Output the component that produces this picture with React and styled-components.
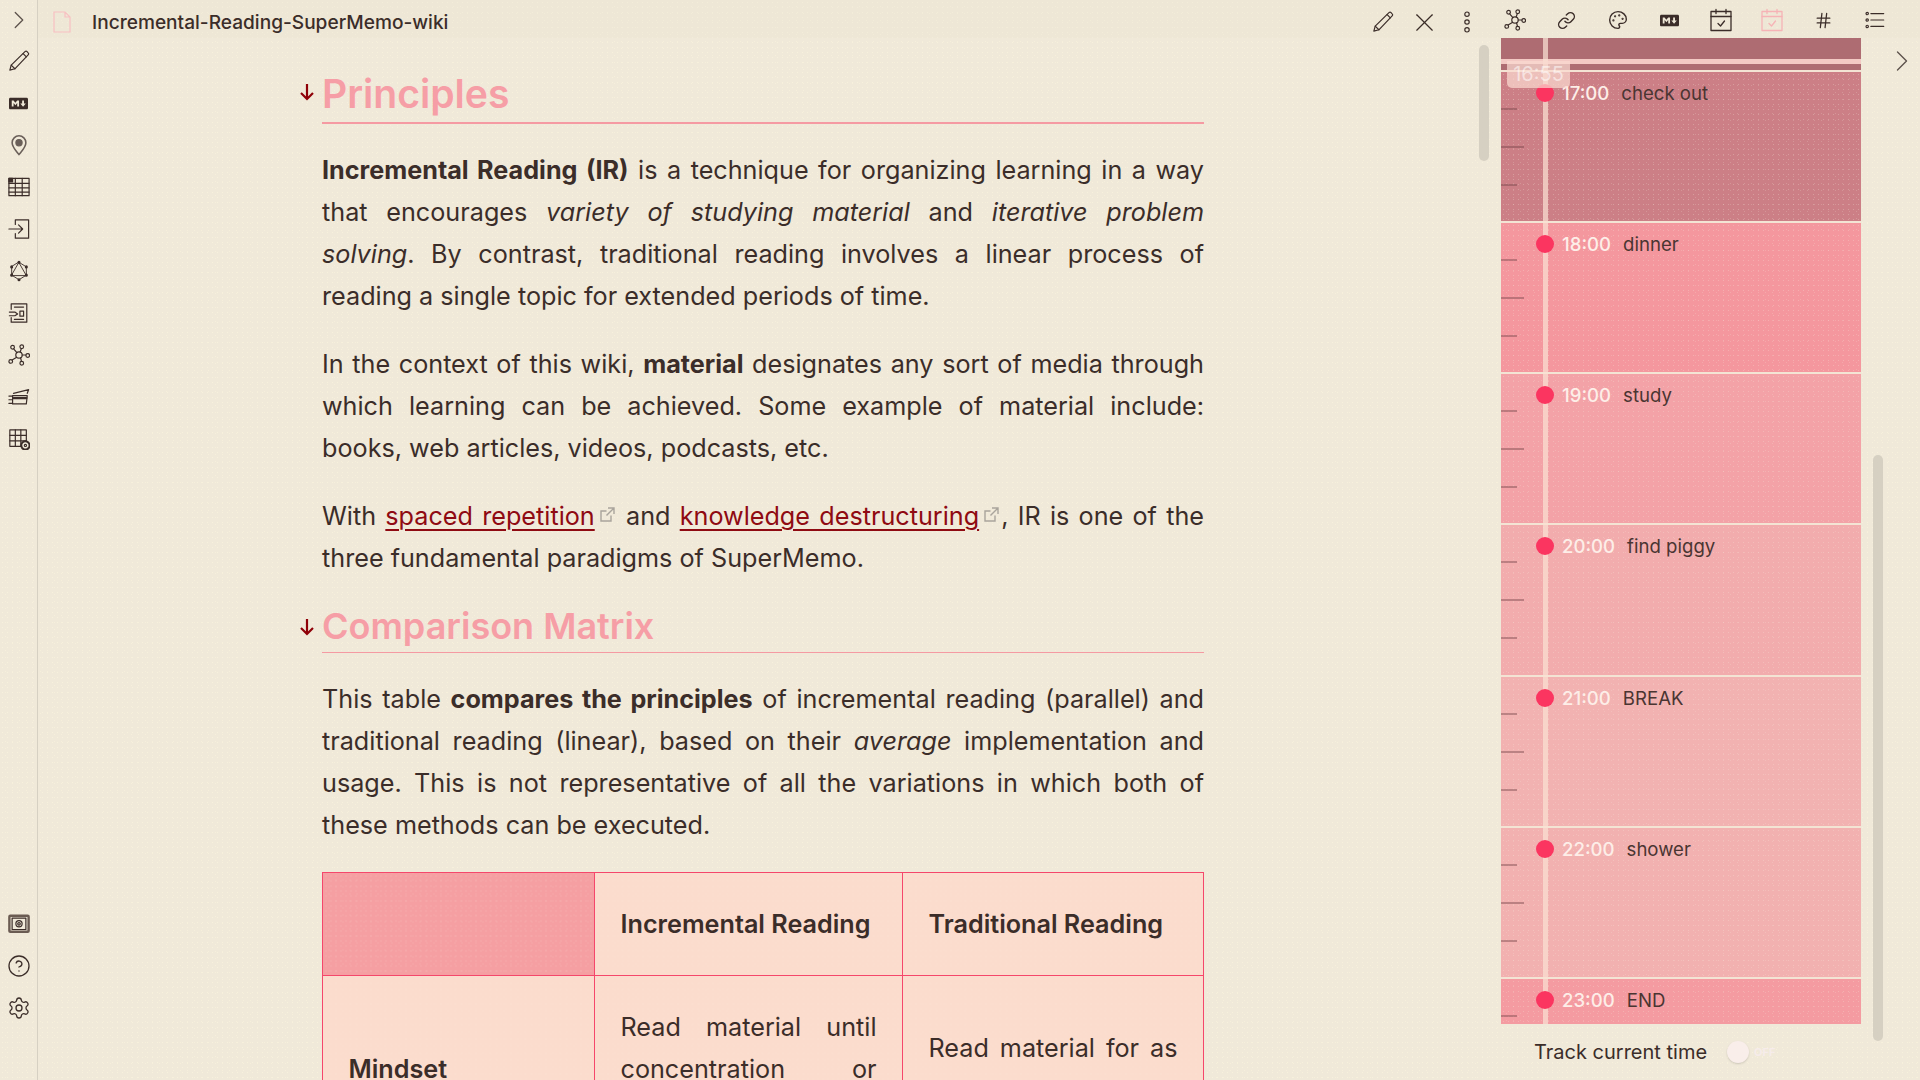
import React from "react";
import styled, { createGlobalStyle } from "styled-components";
import {
  ChevronRight,
  CircleHelp,
  Settings,
  Palette,
  Link as LinkIcon,
  Hash,
  X,
} from "lucide-react";
import { FaMarkdown } from "react-icons/fa";

const speckle = `
  background-image:
    radial-gradient(rgba(245, 238, 220, 0.28) 0.6px, transparent 0.9px),
    radial-gradient(rgba(245, 238, 220, 0.2) 0.5px, transparent 0.8px);
  background-size: 5px 5px, 7px 7px;
  background-position: 0 0, 2px 3px;
`;

const GlobalStyle = createGlobalStyle`
  html, body {
    margin: 0;
    height: 100%;
    overflow: hidden;
  }
  body {
    font-family: Inter, "Noto Sans", sans-serif;
    color: #3b2d29;
    background-color: #f0e9d9;
    background-image:
      radial-gradient(#f8f2dc 0.6px, transparent 0.9px),
      radial-gradient(#f6efdb 0.5px, transparent 0.8px);
    background-size: 5px 5px, 7px 7px;
    background-position: 0 0, 2px 3px;
  }
`;

const Shell = styled.div`
  display: flex;
  width: 1920px;
  height: 1080px;
  overflow: hidden;
`;

const Ribbon = styled.nav`
  width: 37px;
  flex: none;
  border-right: 1px solid #d6d0c2;
  display: flex;
  flex-direction: column;
  justify-content: space-between;
  padding-bottom: 51px;
  box-sizing: content-box;
  height: 1029px;
`;

const RibbonGroup = styled.div`
  display: flex;
  flex-direction: column;
`;

const RibbonTop = styled.div`
  height: 40px;
  display: flex;
  align-items: center;
  justify-content: center;
  color: #5d524c;
`;

const RibbonItem = styled.div`
  height: 42px;
  display: flex;
  align-items: center;
  justify-content: center;
  color: #3b2d29;
`;

const Main = styled.div`
  flex: 1;
  min-width: 0;
  display: flex;
  flex-direction: column;
  position: relative;
`;

const TitleBar = styled.header`
  height: 38px;
  flex: none;
  box-sizing: border-box;
  display: flex;
  align-items: center;
  padding: 6px 33px 0 15px;
  background: rgba(232, 224, 205, 0.2);
`;

const Title = styled.div`
  margin-left: 21px;
  font-size: 19.1px;
  font-weight: 500;
  flex: 1;
`;

const ToolGroup = styled.div`
  display: flex;
  align-items: center;
  gap: ${(p) => p.$gap}px;
  margin: ${(p) => p.$margin || "0"};
`;

const Tool = styled.span`
  width: 24px;
  height: 24px;
  display: flex;
  align-items: center;
  justify-content: center;
  color: ${(p) => (p.$pink ? "#f6b3b6" : "#3b2d29")};
  svg {
    flex: none;
  }
`;

const Body = styled.div`
  flex: 1;
  min-height: 0;
  display: flex;
`;

const Editor = styled.main`
  width: 1463px;
  flex: none;
  position: relative;
  overflow: hidden;
  padding-left: 284px;
  box-sizing: border-box;
`;

const Doc = styled.article`
  width: 882px;
  font-size: 25.2px;
  line-height: 42px;
  text-align: justify;
`;

const Heading = styled.h2`
  position: relative;
  margin: ${(p) => (p.$first ? "32px" : "-3px")} 0 25px;
  padding-bottom: ${(p) => (p.$first ? "4px" : "2px")};
  border-bottom: ${(p) => (p.$first ? "2px" : "1px")} solid #f59aa2;
  font-size: ${(p) => (p.$first ? "39.1px" : "36px")};
  line-height: 48px;
  font-weight: 600;
  color: #f69ea6;
  text-align: left;
`;

const Fold = styled.svg`
  position: absolute;
  left: -23px;
  top: ${(p) => (p.$first ? 13 : 16)}px;
  width: 16px;
  height: 18px;
  fill: none;
  stroke: #8f0008;
  stroke-width: 2.2;
`;

const Para = styled.p`
  margin: 0 0 26px;
  strong {
    font-weight: 650;
  }
`;

const Ext = styled.a`
  color: #8f0a12;
  text-decoration: underline;
  text-decoration-thickness: 2px;
  text-underline-offset: 4px;
`;

const ExtMark = styled.svg`
  display: inline-block;
  width: 15px;
  height: 15px;
  margin: 0 2px 8px 5px;
  vertical-align: middle;
  fill: none;
  stroke: #a9a49c;
  stroke-width: 1.4;
`;

const Table = styled.table`
  width: 882px;
  table-layout: fixed;
  border-collapse: collapse;
  background: #fbdccd;
`;

const Th = styled.th`
  box-sizing: border-box;
  border: 1px solid #f5476b;
  padding: 30px 25.5px;
  font-weight: 600;
  text-align: left;
  background-color: ${(p) => (p.$corner ? "#f59fa2" : "#fbdccd")};
  ${speckle}
  width: ${(p) => p.$w || "auto"};
`;

const Td = styled.td`
  border: 1px solid #f5476b;
  padding: 30px 25.5px;
  font-weight: ${(p) => (p.$label ? 600 : 400)};
  text-align: ${(p) => (p.$label ? "left" : "justify")};
  vertical-align: middle;
  ${speckle}
`;

const Scroll = styled.div`
  position: absolute;
  left: ${(p) => p.$left}px;
  top: ${(p) => p.$top}px;
  width: 10px;
  height: ${(p) => p.$h}px;
  border-radius: 5px;
  background: #d6d0c2;
`;

const Side = styled.aside`
  width: 360px;
  flex: none;
  display: flex;
  flex-direction: column;
`;

const Timeline = styled.div`
  position: relative;
  height: 986px;
  overflow: hidden;
`;

const Stub = styled.div`
  height: 31.5px;
  background: #ae6c72;
`;

const Hour = styled.div`
  position: relative;
  height: 151.33px;
  box-sizing: border-box;
  border-top: 2px solid #f3e4d4;
  background-color: ${(p) => p.$bg};
  ${speckle}
  padding: 9px 0 0 35px;
  display: flex;
  align-items: center;
  align-content: flex-start;
  flex-wrap: wrap;
  font-size: 18.6px;
  line-height: 24px;
`;

const Dot = styled.span`
  position: relative;
  z-index: 1;
  width: 18px;
  height: 18px;
  border-radius: 50%;
  background: #fb3560;
  margin-right: 8px;
`;

const Time = styled.span`
  position: relative;
  z-index: 1;
  color: #fdeee8;
  font-weight: 500;
  margin-right: 12px;
`;

const Label = styled.span`
  color: #4a3532;
`;

const Tick = styled.i`
  position: absolute;
  left: 0;
  top: ${(p) => p.$at}px;
  width: ${(p) => p.$w}px;
  height: 2px;
  background: rgba(120, 70, 75, 0.45);
`;

const NowStrip = styled.div`
  position: absolute;
  left: 0;
  right: 0;
  top: 21px;
  height: 5px;
  background: #f3c9c4;
`;

const NowLine = styled.div`
  position: absolute;
  left: 42px;
  top: 0;
  bottom: 0;
  width: 5px;
  background: rgba(250, 224, 210, 0.72);
`;

const NowPill = styled.div`
  position: absolute;
  z-index: 2;
  left: 6px;
  top: 23px;
  width: 63px;
  height: 27px;
  border-radius: 0 0 5px 5px;
  background: rgba(250, 218, 208, 0.72);
  color: rgba(255, 255, 255, 0.55);
  font-size: 20px;
  line-height: 27px;
  text-align: center;
`;

const TrackRow = styled.div`
  flex: 1;
  display: flex;
  align-items: center;
  padding-left: 33px;
  font-size: 20px;
`;

const Knob = styled.span`
  width: 22px;
  height: 22px;
  border-radius: 50%;
  background: #f9eeea;
  box-shadow: 0 1px 2px rgba(0, 0, 0, 0.15);
  margin-left: 20px;
`;

const Off = styled.span`
  margin-left: 5px;
  font-size: 11px;
  font-weight: 700;
  color: #f6ecea;
`;

const Expand = styled.div`
  position: absolute;
  left: 1846px;
  top: 43px;
  color: #5d524c;
`;

const Glyph = styled.svg`
  width: ${(p) => p.$s || 22}px;
  height: ${(p) => p.$s || 22}px;
  fill: none;
  stroke: currentColor;
  stroke-width: 1.3;
  stroke-linecap: round;
  stroke-linejoin: round;
`;

const PageIcon = styled.svg`
  width: 18px;
  height: 22px;
  flex: none;
  fill: none;
  stroke: #f8c0c2;
  stroke-width: 1.2;
`;

const I = ({ s, children }) => (
  <Glyph viewBox="0 0 24 24" $s={s}>
    {children}
  </Glyph>
);

const PencilIcon = ({ s }) => (
  <I s={s}>
    <path d="M2 22l1.500-5.500L18.500 1.800c.8-.7 1.600-.7 2.300 0l1.200 1.300c.7.700.7 1.500 0 2.200L7.500 20.500z" />
    <path d="M16.500 4l3.500 3.500M3.500 16.500l4 4" />
  </I>
);

const PinIcon = () => (
  <Glyph viewBox="0 0 24 24" $s={22} style={{ color: "#6a5f59" }}>
    <path d="M12 22.500C8 17.500 4.500 14 4.500 9.500a7.500 7.500 0 0 1 15 0C19.500 14 16 17.500 12 22.500z" strokeWidth="1.700" />
    <circle cx="12" cy="9.500" r="3.400" fill="currentColor" />
  </Glyph>
);

const TableIcon = () => (
  <I>
    <rect x="1" y="2.500" width="22" height="19" />
    <path d="M1 8h22M1 13h22M1 17.500h22M8 2.500v19M15.500 2.500v19" />
    <rect x="1" y="2.500" width="4" height="4" fill="currentColor" />
  </I>
);

const EnterIcon = () => (
  <I>
    <path d="M8 7V2h14.500v20H8v-5" />
    <path d="M1 12h15M11.500 7.500l4.500 4.500-4.500 4.500" />
  </I>
);

const HexIcon = () => (
  <I>
    <path d="M12 2.500L20 7.500v9L12 21.500 4 16.500v-9z" strokeWidth="1" />
    <path d="M12 3l8 14H4z" strokeWidth="1" />
    <circle cx="12" cy="2.500" r="1" fill="currentColor" />
    <circle cx="20" cy="7.500" r="1" fill="currentColor" />
    <circle cx="20" cy="16.500" r="1" fill="currentColor" />
    <circle cx="12" cy="21.500" r="1" fill="currentColor" />
    <circle cx="4" cy="16.500" r="1" fill="currentColor" />
    <circle cx="4" cy="7.500" r="1" fill="currentColor" />
  </I>
);

const ImportIcon = () => (
  <I>
    <path d="M3.500 8V2h17v20h-17v-5" />
    <path d="M7 5.500h10M7 19h10M1.500 11h6l3 2-3 2h-6" />
    <rect x="13" y="10" width="4" height="5.500" />
  </I>
);

const GraphIcon = ({ s }) => (
  <I s={s}>
    <circle cx="12" cy="12" r="3.500" />
    <circle cx="5" cy="3.500" r="2" />
    <circle cx="15" cy="3" r="2" />
    <circle cx="21.500" cy="12.500" r="2" />
    <circle cx="15" cy="21" r="2" />
    <circle cx="3" cy="19" r="2" />
    <path d="M6.200 5.200l3.500 4.200M14.500 5l-1.200 3.700M15.500 12h4M13.700 15l1 4M9.500 14.500l-5 3" />
  </I>
);

const CardsIcon = () => (
  <I>
    <path d="M6 8L22.500 4 21 8" />
    <path d="M5 10.500h16l-1 9H5z" />
    <path d="M6 13.200h14" strokeWidth="2.500" />
    <path d="M1 11h4M1 15h4M1 19h4" />
  </I>
);

const TableGearIcon = () => (
  <I>
    <rect x="2" y="2" width="18" height="18" />
    <path d="M2 8h18M2 14h18M8 2v18M14 2v18" />
    <circle cx="19" cy="19" r="4.500" fill="#f0e9d9" strokeWidth="2.200" strokeDasharray="2 1" />
    <circle cx="19" cy="19" r="1.200" />
  </I>
);

const SafeIcon = () => (
  <I>
    <rect x="1.500" y="3" width="21" height="17.500" rx="1" strokeWidth="2.600" stroke="#6a5b52" />
    <rect x="4.500" y="5.500" width="15" height="12.500" />
    <circle cx="12" cy="11.800" r="3.400" />
    <circle cx="12" cy="11.800" r="1.400" />
  </I>
);

const CalendarIcon = () => (
  <I s={24}>
    <rect x="2" y="3.500" width="20" height="19" />
    <path d="M2 8.500h20M7 1.500v4M17 1.500v4M9 15.500l2.500 2.500 4-5" />
  </I>
);

const DotsIcon = () => (
  <I>
    <circle cx="12" cy="3.500" r="2.400" />
    <circle cx="12" cy="12" r="2.400" />
    <circle cx="12" cy="20.500" r="2.400" />
  </I>
);

const ListIcon = () => (
  <I>
    <path d="M7.500 5h14M7.500 12h14M7.500 19h14" />
    <circle cx="3.500" cy="5" r="1.300" />
    <circle cx="3.500" cy="12" r="1.300" />
    <circle cx="3.500" cy="19" r="1.300" />
  </I>
);

const ArrowFold = ({ first }) => (
  <Fold viewBox="0 0 16 18" $first={first}>
    <path d="M8 1v15M2 10l6 6 6-6" />
  </Fold>
);

const ExternalMark = () => (
  <ExtMark viewBox="0 0 15 15">
    <path d="M11 8.500V14H1V4h5.500M8 1h6v6M14 1L6.500 8.500" />
  </ExtMark>
);

const ribbonTop = [
  <PencilIcon key="a" />,
  <FaMarkdown key="b" size={19} />,
  <PinIcon key="c" />,
  <TableIcon key="d" />,
  <EnterIcon key="e" />,
  <HexIcon key="f" />,
  <ImportIcon key="g" />,
  <GraphIcon key="h" />,
  <CardsIcon key="i" />,
  <TableGearIcon key="j" />,
];

const hours = [
  { time: "17:00", label: "check out", bg: "#cc7f86" },
  { time: "18:00", label: "dinner", bg: "#f4979e" },
  { time: "19:00", label: "study", bg: "#f3a2a7" },
  { time: "20:00", label: "find piggy", bg: "#f2acad" },
  { time: "21:00", label: "BREAK", bg: "#f2b2b1" },
  { time: "22:00", label: "shower", bg: "#f2b1b0" },
  { time: "23:00", label: "END", bg: "#f49ba1" },
];

export default function App() {
  return (
    <Shell>
      <GlobalStyle />
      <Ribbon>
        <RibbonGroup>
          <RibbonTop>
            <ChevronRight size={30} strokeWidth={1} />
          </RibbonTop>
          {ribbonTop.map((icon, i) => (
            <RibbonItem key={i}>{icon}</RibbonItem>
          ))}
        </RibbonGroup>
        <RibbonGroup>
          <RibbonItem>
            <SafeIcon />
          </RibbonItem>
          <RibbonItem>
            <CircleHelp size={24} strokeWidth={1.3} />
          </RibbonItem>
          <RibbonItem>
            <Settings size={24} strokeWidth={1.3} />
          </RibbonItem>
        </RibbonGroup>
      </Ribbon>

      <Main>
        <TitleBar>
          <PageIcon viewBox="0 0 18 22">
            <path d="M1 1h11l5 5v15H1zM12 1v5h5" />
          </PageIcon>
          <Title>Incremental-Reading-SuperMemo-wiki</Title>
          <ToolGroup $gap={17.6}>
            <Tool><PencilIcon /></Tool>
            <Tool><X size={31} strokeWidth={0.9} /></Tool>
            <Tool><DotsIcon /></Tool>
          </ToolGroup>
          <ToolGroup $gap={27.5} $margin="-4px 0 0 24px">
            <Tool><GraphIcon /></Tool>
            <Tool><LinkIcon size={19} strokeWidth={1.8} /></Tool>
            <Tool><Palette size={20} strokeWidth={1.7} /></Tool>
            <Tool><FaMarkdown size={19} /></Tool>
            <Tool><CalendarIcon /></Tool>
            <Tool $pink><CalendarIcon /></Tool>
            <Tool><Hash size={19} strokeWidth={1.6} /></Tool>
            <Tool><ListIcon /></Tool>
          </ToolGroup>
        </TitleBar>

        <Body>
          <Editor>
            <Doc>
              <Heading $first>
                <ArrowFold first />
                Principles
              </Heading>
              <Para>
                <strong>Incremental Reading (IR)</strong> is a technique for organizing
                learning in a way that encourages <em>variety of studying material</em> and{" "}
                <em>iterative problem solving</em>. By contrast, traditional reading involves
                a linear process of reading a single topic for extended periods of time.
              </Para>
              <Para>
                In the context of this wiki, <strong>material</strong> designates any sort of
                media through which learning can be achieved. Some example of material
                include: books, web articles, videos, podcasts, etc.
              </Para>
              <Para>
                With <Ext>spaced repetition</Ext>
                <ExternalMark /> and <Ext>knowledge destructuring</Ext>
                <ExternalMark />, IR is one of the three fundamental paradigms of SuperMemo.
              </Para>
              <Heading>
                <ArrowFold />
                Comparison Matrix
              </Heading>
              <Para>
                This table <strong>compares the principles</strong> of incremental reading
                (parallel) and traditional reading (linear), based on their <em>average</em>{" "}
                implementation and usage. This is not representative of all the variations in
                which both of these methods can be executed.
              </Para>
              <Table>
                <thead>
                  <tr>
                    <Th $corner $w="272px" />
                    <Th $w="308px">Incremental Reading</Th>
                    <Th>Traditional Reading</Th>
                  </tr>
                </thead>
                <tbody>
                  <tr>
                    <Td $label>Mindset</Td>
                    <Td>Read material until concentration or interest drops.</Td>
                    <Td>Read material for as long as needed.</Td>
                  </tr>
                </tbody>
              </Table>
            </Doc>
            <Scroll $left={1441} $top={7} $h={116} />
          </Editor>

          <Side>
            <Timeline>
              <Stub />
              {hours.map((h) => (
                <Hour key={h.time} $bg={h.bg}>
                  <Dot />
                  <Time>{h.time}</Time>
                  <Label>{h.label}</Label>
                  <Tick $at={36} $w={16} />
                  <Tick $at={74} $w={23} />
                  <Tick $at={112} $w={16} />
                </Hour>
              ))}
              <NowStrip />
              <NowLine />
              <NowPill>16:55</NowPill>
            </Timeline>
            <TrackRow>
              Track current time
              <Knob />
              <Off>OFF</Off>
            </TrackRow>
          </Side>
        </Body>
        <Scroll $left={1835} $top={455} $h={586} />
        <Expand>
          <ChevronRight size={36} strokeWidth={0.9} />
        </Expand>
      </Main>
    </Shell>
  );
}
